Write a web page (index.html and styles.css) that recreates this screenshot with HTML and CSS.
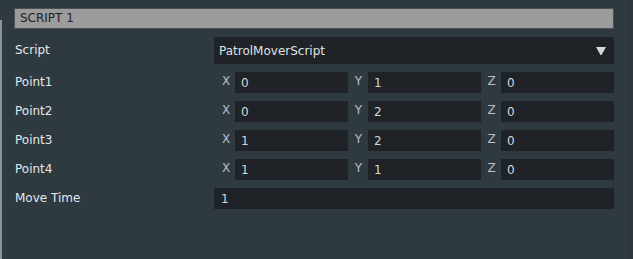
FILE: index.html
```html
<!DOCTYPE html>
<html>
<head>
<meta charset="utf-8">
<link rel="stylesheet" href="styles.css">
</head>
<body>
<div class="panel">
  <div class="header">SCRIPT 1</div>
  <div class="row row-script">
    <div class="label">Script</div>
    <div class="dropdown">
      <span class="value">PatrolMoverScript</span>
      <svg class="arrow" width="10" height="8" viewBox="0 0 10 8"><path d="M0 0 H10 L5.5 8 H4.5 Z" fill="#d4d8da"/></svg>
    </div>
  </div>
  <div class="row">
    <div class="label">Point1</div>
    <div class="vec">
      <span class="axis ax">X</span><div class="field">0</div>
      <span class="axis">Y</span><div class="field">1</div>
      <span class="axis">Z</span><div class="field">0</div>
    </div>
  </div>
  <div class="row">
    <div class="label">Point2</div>
    <div class="vec">
      <span class="axis ax">X</span><div class="field">0</div>
      <span class="axis">Y</span><div class="field">2</div>
      <span class="axis">Z</span><div class="field">0</div>
    </div>
  </div>
  <div class="row">
    <div class="label">Point3</div>
    <div class="vec">
      <span class="axis ax">X</span><div class="field">1</div>
      <span class="axis">Y</span><div class="field">2</div>
      <span class="axis">Z</span><div class="field">0</div>
    </div>
  </div>
  <div class="row">
    <div class="label">Point4</div>
    <div class="vec">
      <span class="axis ax">X</span><div class="field">1</div>
      <span class="axis">Y</span><div class="field">1</div>
      <span class="axis">Z</span><div class="field">0</div>
    </div>
  </div>
  <div class="row">
    <div class="label">Move Time</div>
    <div class="field wide">1</div>
  </div>
</div>
</body>
</html>
```
FILE: styles.css
```css
html, body {
  margin: 0;
  padding: 0;
  background: #2e3940;
  height: 100%;
}
body {
  font-family: "DejaVu Sans", "Noto Sans", sans-serif;
  font-size: 12px;
  color: #e4e7e9;
}
.panel {
  box-sizing: border-box;
  height: 259px;
  width: 633px;
  padding: 8px 15px 0 14px;
  border-right: 4px solid #2b353b;
  background: linear-gradient(#8a959b, #8a959b) no-repeat 0 20px / 2px 100%;
}
.header {
  height: 19px;
  background: #9c9c9c;
  border: 1px solid #485257;
  color: #1d2124;
  font-size: 12px;
  line-height: 19px;
  padding-left: 5px;
}
.row {
  display: flex;
  align-items: center;
  margin-top: 8px;
  height: 21px;
}
.row-script {
  height: 27px;
}
.label {
  width: 200px;
  flex: none;
  padding-left: 1px;
  box-sizing: border-box;
  line-height: 21px;
}
.dropdown {
  width: 400px;
  height: 27px;
  background: #1f2327;
  display: flex;
  align-items: center;
  justify-content: space-between;
  padding: 0 8px 0 5px;
  box-sizing: border-box;
  color: #dfe2e4;
}
.arrow {
  display: block;
}
.vec {
  display: flex;
  width: 400px;
  height: 21px;
}
.axis {
  width: 20px;
  flex: none;
  text-align: center;
  color: #b9bec1;
  line-height: 19px;
  padding-left: 1px;
  box-sizing: border-box;
}
.axis.ax {
  width: 21px;
  padding-left: 3px;
}
.field {
  width: 113px;
  flex: none;
  height: 21px;
  background: #1f2327;
  box-sizing: border-box;
  padding-left: 6px;
  line-height: 23px;
  color: #d4d8da;
}
.field.wide {
  width: 400px;
  padding-left: 7px;
}
```
